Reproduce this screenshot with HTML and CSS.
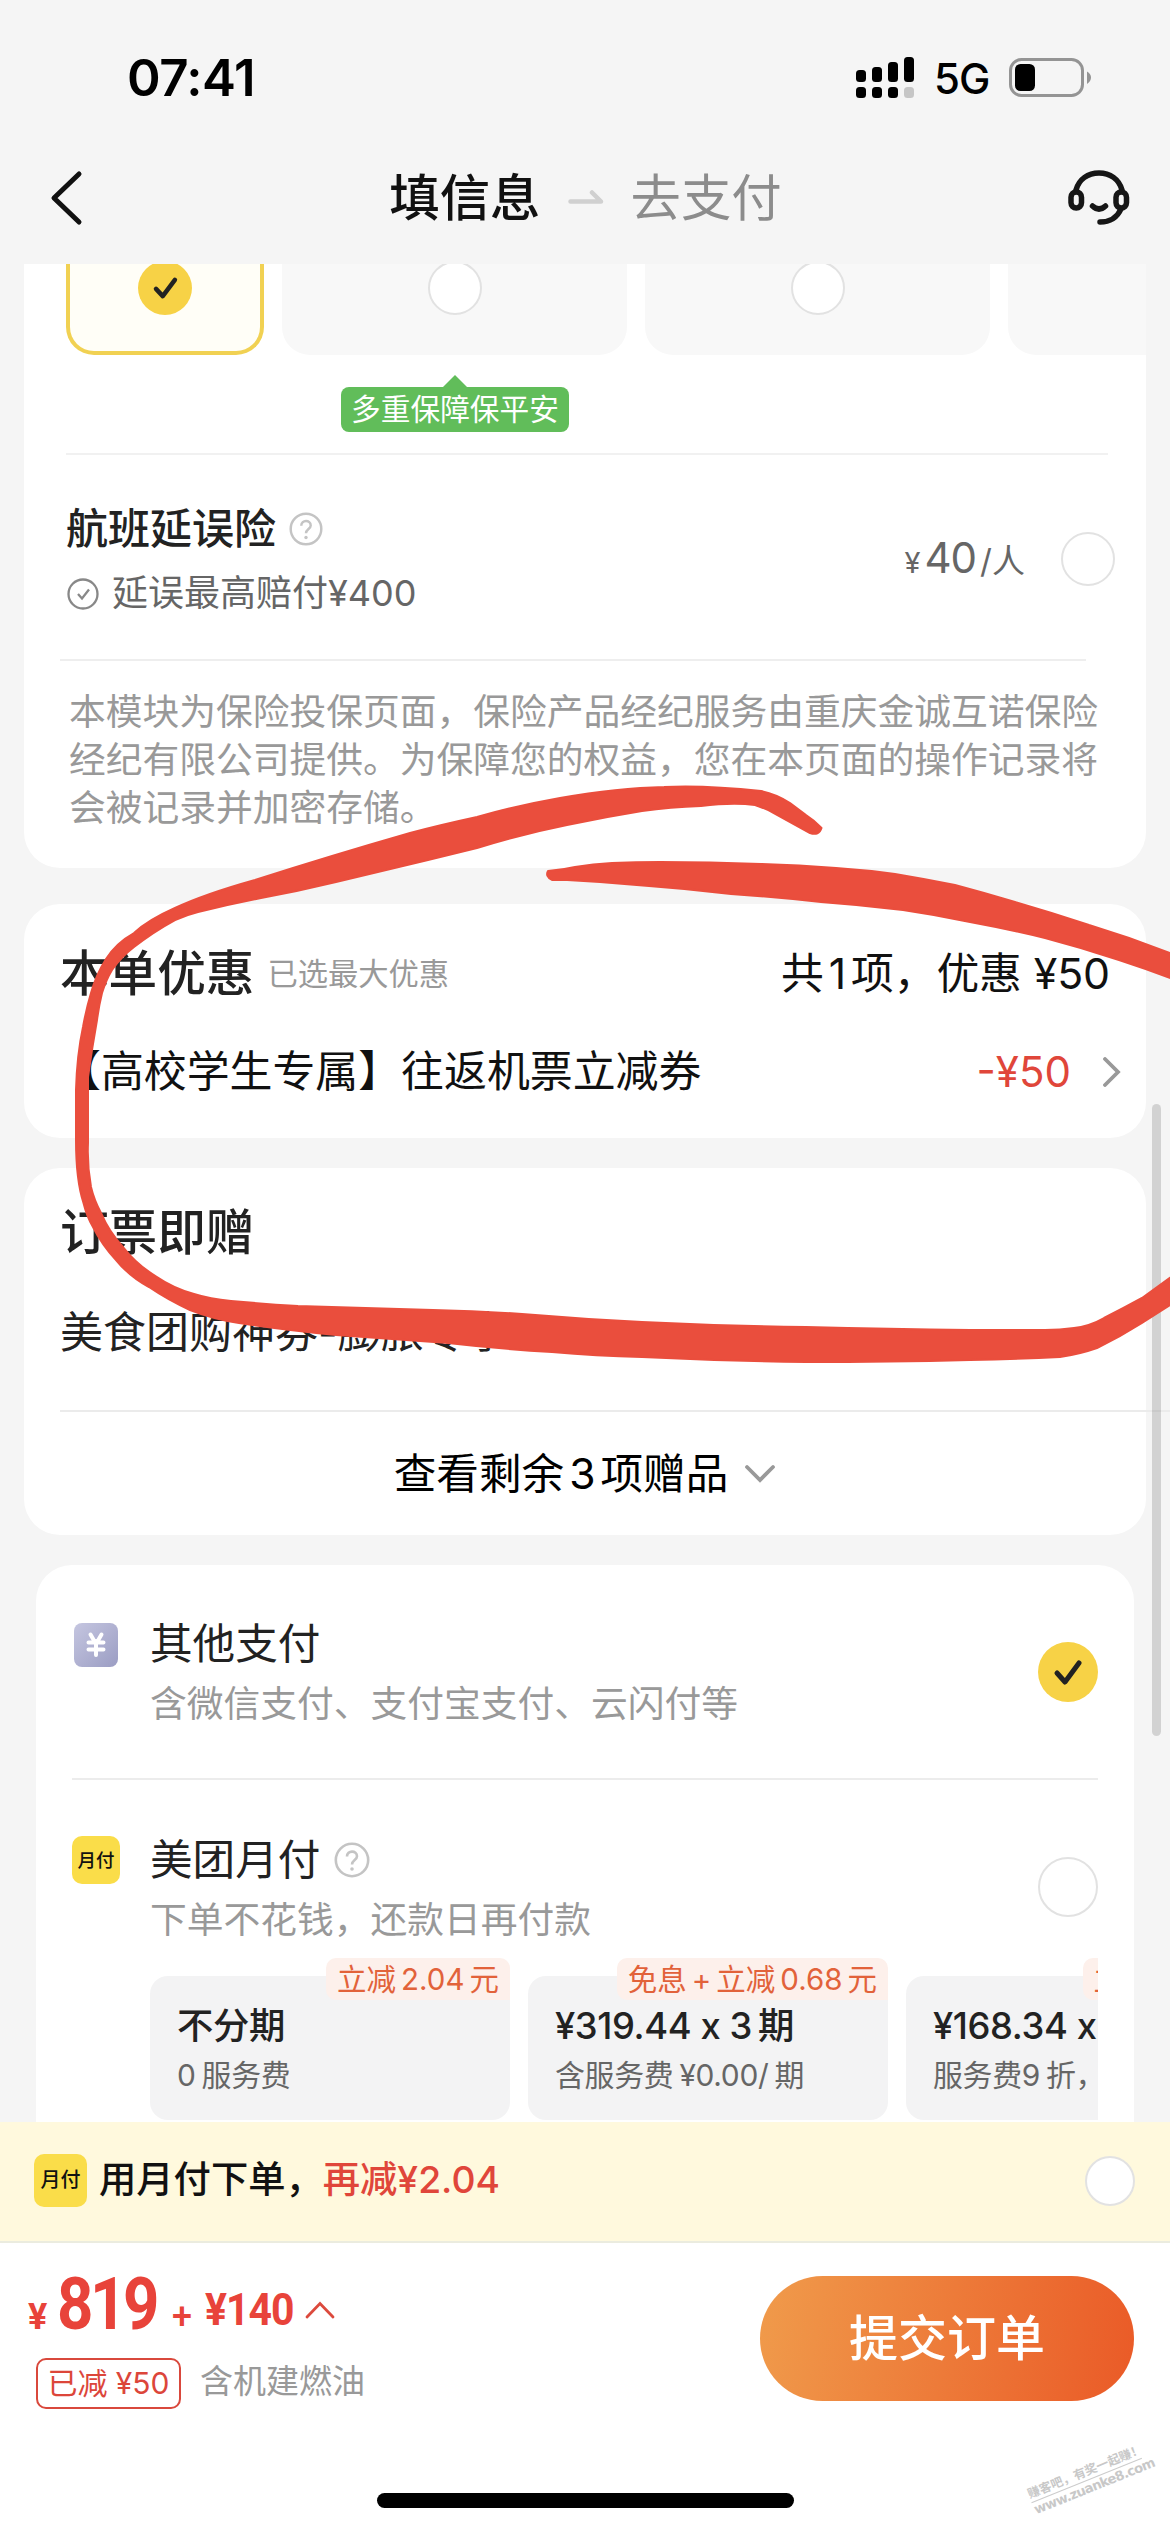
FILE: index.html
```html
<!DOCTYPE html>
<html lang="zh-CN">
<head>
<meta charset="utf-8">
<title>填信息</title>
<link rel="stylesheet" href="styles.css">
</head>
<body>
<div class="screen">
  <header class="status">
    <span class="time">07:41</span>
    <svg class="signal" width="58" height="42" viewBox="0 0 58 42">
      <rect x="0" y="13" width="10" height="12" rx="3.5"/><rect x="16" y="10" width="10" height="15" rx="3.5"/><rect x="32" y="5" width="10" height="20" rx="3.5"/><rect x="48" y="0" width="10" height="25" rx="3.5"/>
      <rect x="0" y="30" width="10" height="11" rx="3.5"/><rect x="16" y="30" width="10" height="11" rx="3.5"/><rect x="32" y="30" width="10" height="11" rx="3.5"/><rect x="48" y="30" width="10" height="11" rx="3.5" fill="#c6c6c6"/>
    </svg>
    <span class="net">5G</span>
    <svg class="battery" width="84" height="40" viewBox="0 0 84 40">
      <rect x="1.5" y="1.5" width="72" height="36" rx="11" fill="none" stroke="#949494" stroke-width="3"/>
      <rect x="6" y="6" width="20" height="27" rx="5.500"/><path d="M78 13.500Q82 16 82 19.500T78 26Z" fill="#949494"/>
    </svg>
  </header>
  <nav class="nav">
    <svg class="back" width="34" height="56" viewBox="0 0 34 56"><path d="M30 4L5 28L30 52" fill="none" stroke="#111" stroke-width="5" stroke-linecap="round" stroke-linejoin="round"/></svg>
    <div class="steps">
      <span class="step on">填信息</span>
      <svg width="36" height="16" viewBox="0 0 36 16"><path d="M2.500 11.500H33L24 2.500" fill="none" stroke="#d0d0d0" stroke-width="4.500" stroke-linecap="round" stroke-linejoin="round"/></svg>
      <span class="step">去支付</span>
    </div>
    <svg class="service" width="62" height="56" viewBox="0 0 62 56" fill="none" stroke="#161616" stroke-width="5.500" stroke-linecap="round">
      <path d="M8 20C11 9 20 3 31 3S51 9 54 20"/><rect x="3" y="22" width="10.500" height="16" rx="5.200"/><rect x="48" y="22" width="10.500" height="16" rx="5.200"/>
      <path d="M53 39C49 48 41 52 32 52M24.500 36Q31 42 37.500 36"/>
    </svg>
  </nav>

  <main class="content">
    <section class="card insure">
      <div class="options">
        <div class="option chosen"><span class="radio checked"><svg viewBox="0 0 60 60"><path d="M20 31L27.500 39L41 21"/></svg></span></div>
        <div class="option"><span class="radio"></span></div>
        <div class="option"><span class="radio"></span></div>
        <div class="option"></div>
      </div>
      <div class="tip">多重保障保平安</div>
      <div class="delay">
        <div class="delay-info">
          <div class="delay-title">航班延误险<svg class="help" viewBox="0 0 36 36"><circle cx="18" cy="18" r="16.200"/><path d="M13 14.500C13 8 23 8 23 14.200C23 18 18 18 18 22.500"/><circle class="dot" cx="18" cy="27" r="1.800"/></svg></div>
          <div class="delay-sub"><svg width="32" height="32" viewBox="0 0 32 32" fill="none" stroke="#888" stroke-width="2.300"><circle cx="16" cy="16" r="14.500"/><path d="M11 16L15 20.500L22 11.500"/></svg>延误最高赔付¥400</div>
        </div>
        <div class="delay-price"><small>¥</small>40<em>/人</em></div>
        <span class="radio"></span>
      </div>
      <p class="notice">本模块为保险投保页面，保险产品经纪服务由重庆金诚互诺保险经纪有限公司提供。为保障您的权益，您在本页面的操作记录将会被记录并加密存储。</p>
    </section>

    <section class="card discount">
      <div class="row head"><h2>本单优惠</h2><span class="hint">已选最大优惠</span><span class="sum">共<i>1</i>项，优惠 ¥50</span></div>
      <div class="row coupon"><span>【高校学生专属】往返机票立减券</span><span class="minus">-¥50</span><svg width="18" height="30" viewBox="0 0 18 30"><path d="M2 2L15 15L2 28" fill="none" stroke="#999" stroke-width="3.800" stroke-linecap="round"/></svg></div>
    </section>

    <section class="card gifts">
      <div class="row head"><h2>订票即赠</h2></div>
      <div class="row gift">美食团购神券-膨胀专享</div>
      <div class="more"><span>查看剩余<b>3</b>项赠品</span><svg width="32" height="20" viewBox="0 0 32 20"><path d="M3 3L16 16L29 3" fill="none" stroke="#999" stroke-width="3.800" stroke-linecap="round"/></svg></div>
    </section>

    <section class="card pay">
      <div class="method other">
        <svg class="logo coin" width="44" height="44" viewBox="0 0 44 44"><defs><linearGradient id="lav" x1="0" y1="0" x2="1" y2="1"><stop offset="0" stop-color="#c5c6e0"/><stop offset="1" stop-color="#9b9dc3"/></linearGradient></defs><rect width="44" height="44" rx="8" fill="url(#lav)"/><path d="M16.500 11.500L20 17.500M27.500 11.500L24 17.500M14.500 19.500H29.500M14.500 26.500H29.500M22 18V32" fill="none" stroke="#fff" stroke-width="4" stroke-linecap="round"/></svg>
        <div class="label"><div class="name">其他支付</div><div class="desc">含微信支付、支付宝支付、云闪付等</div></div>
        <span class="radio big checked"><svg viewBox="0 0 60 60"><path d="M19 31L27 40L41 21"/></svg></span>
      </div>
      <div class="method monthly">
        <span class="logo yf">月付</span>
        <div class="label"><div class="name">美团月付<svg class="help" viewBox="0 0 36 36"><circle cx="18" cy="18" r="16.200"/><path d="M13 14.500C13 8 23 8 23 14.200C23 18 18 18 18 22.500"/><circle class="dot" cx="18" cy="27" r="1.800"/></svg></div><div class="desc">下单不花钱，还款日再付款</div></div>
        <span class="radio big"></span>
      </div>
      <div class="plans">
        <div class="plan"><span class="tag">立减<i>2.04</i>元</span><b>不分期</b><span class="fee">0<i></i>服务费</span></div>
        <div class="plan"><span class="tag">免息<i>+</i>立减<i>0.68</i>元</span><b>¥319.44 x 3<i></i>期</b><span class="fee">含服务费<i></i>¥0.00/<i></i>期</span></div>
        <div class="plan"><span class="tag">立减<i>0.34</i>元</span><b>¥168.34 x 6期</b><span class="fee">服务费9<i></i>折，</span></div>
      </div>
    </section>
  </main>

  <div class="promo"><span class="yf">月付</span><span class="promo-text">用月付下单，<em>再减¥2.04</em></span><span class="radio small"></span></div>

  <footer class="bar">
    <div class="totals">
      <div class="price"><span class="yen">¥</span><span class="fare">819</span><span class="plus">+</span><span class="tax">¥140</span><svg width="30" height="18" viewBox="0 0 30 18"><path d="M2 16L15 2.500L28 16" fill="none" stroke="#dc4a3d" stroke-width="2.800" stroke-linecap="round"/></svg></div>
      <div class="extras"><span class="off">已减 ¥50</span><span class="fuel">含机建燃油</span></div>
    </div>
    <button class="submit">提交订单</button>
  </footer>
  <div class="home-area"><div class="home"></div></div>

  <div class="scroll"></div>
  <svg class="ink" width="1170" height="600" viewBox="0 780 1170 600">
    <path d="M821.500 828Q814 820 806 815L790 803Q776 794 761 791Q705 785 664 787Q618 788 560 798Q515 806 477 817Q440 825 410 833Q330 856 255 880Q205 894 175 908Q148 920 134 933Q116 943 106 959Q96 975 91 993Q86 1010 83 1027Q77 1055 76 1090V1140Q76 1180 83.500 1203Q87 1217 93 1227Q102 1245 116 1260Q130 1277 149 1287Q168 1300 190 1310Q213 1319 239 1323Q285 1330 336 1335Q390 1339 448 1343Q500 1349 552 1352Q596 1356 642 1357Q725 1361 806 1362Q890 1362 970 1360Q1020 1359 1060 1357Q1080 1354 1097 1348Q1120 1337 1142 1323L1175 1302V1274L1142 1298Q1122 1309 1104 1318Q1090 1326 1074 1328Q1060 1330 1045 1330H970Q890 1329 806 1327Q724 1326 642 1322Q582 1319 522 1314Q478 1311 433 1310Q365 1308 298 1306Q264 1304 231 1301Q210 1299 194 1294Q173 1288 157 1277Q137 1265 123 1247Q109 1232 101 1213Q94 1200 91 1187Q87 1165 88 1143V1077Q92 1048 97 1020Q99 1005 102 993Q106 980 112 970Q121 957 134 947Q153 932 175 920Q186 915 198 912Q230 904 261 898Q299 891 336 882Q382 871 428 860L477 848Q522 834 567 825Q605 817 642 811Q670 807 701 806Q733 802 755 805Q764 808 772 812Q790 822 810 833Q819 836 821.500 828Z"/>
    <path d="M548 871Q562 870 575 867Q593 864 612 863Q636 862 660 862Q710 862 761 864Q799 865 836 868Q866 870 895 874Q925 879 955 885Q985 893 1015 902Q1053 913 1089 925Q1132 938 1175 955V980Q1147 969 1119 960Q1083 948 1045 938Q1008 929 970 922Q937 915 903 910Q862 905 821 902Q776 897 731 894Q690 889 649 886Q608 882 567 880H552Q545 876 548 871Z"/>
  </svg>
  <div class="mark"><span>赚客吧，有奖一起赚！</span><span class="url">www.zuanke8.com</span></div>
</div>
</body>
</html>
```
FILE: styles.css
```css
* { box-sizing: border-box; }
body { margin: 0; }
i, em { font-style: normal; }
svg { display: block; flex: none; }
.screen {
  position: relative;
  width: 1170px;
  height: 2532px;
  overflow: hidden;
  display: flex;
  flex-direction: column;
  background: #f5f5f5;
  color: #222;
  font-family: Inter, "Noto Sans CJK SC", sans-serif;
  line-height: 1.2;
}

/* status bar and navigation */
.status { height: 132px; padding: 24px 77px 0 127px; display: flex; align-items: center; color: #000; }
.time { font-size: 51px; font-weight: 600; letter-spacing: -0.5px; margin-right: auto; }
.net { font-size: 42px; font-weight: 500; margin: 3px 0 0 20px; width: 75px; letter-spacing: -1px; }
.nav { height: 132px; padding: 0 40px 0 49px; display: flex; align-items: center; justify-content: space-between; }
.steps { display: flex; align-items: center; gap: 27px; font-size: 50.4px; line-height: 66px; padding-left: 20px; }
.step { color: #8c8c8c; }
.step.on { color: #111; font-weight: 500; }

.content { height: 1858px; display: flex; flex-direction: column; overflow: hidden; }
.card { flex: none; margin: 0 24px; background: #fff; border-radius: 36px; }
.card h2 { margin: 0; font-size: 48.6px; font-weight: 500; }
.row { display: flex; align-items: center; padding: 0 36px; }

.radio { display: block; flex: none; width: 54px; height: 54px; border: 2.5px solid #e2e2e2; border-radius: 50%; background: #fff; }
.radio.big { width: 60px; height: 60px; }
.radio.small { width: 50px; height: 50px; }
.radio.checked { border: 0; background: #f7d246; }
.radio path { fill: none; stroke: #222; stroke-width: 5; stroke-linecap: round; stroke-linejoin: round; }
.help { width: 36px; height: 36px; fill: none; stroke: #c4c4c4; stroke-width: 2.6; }
.help .dot { fill: #c4c4c4; stroke: none; }

/* insurance */
.insure { height: 604px; border-radius: 0 0 36px 36px; }
.options { height: 91px; padding-left: 42px; display: flex; gap: 18px; overflow: hidden; }
.option { flex: none; width: 345px; height: 91px; background: #f8f8f8; border-radius: 0 0 28px 28px; display: flex; justify-content: center; }
.option .radio { margin-top: -3px; }
.option.chosen { width: 198px; background: #fffef7; border: 4px solid #f1d152; border-top: 0; }
.tip { position: relative; width: 228px; height: 45px; margin: 32px 0 21px 317px; border-radius: 8px; background: #61bd5a; color: #fff; font-size: 29.7px; line-height: 45px; text-align: center; white-space: nowrap; }
.tip::before { content: ""; position: absolute; left: 102px; top: -12px; border: 12px solid transparent; border-top: 0; border-bottom-color: #61bd5a; }
.delay { height: 206px; margin: 0 38px 0 42px; padding-top: 42px; border-top: 2px solid #f1f1f1; display: flex; }
.delay-info { flex: 1; }
.delay-title { display: flex; align-items: center; height: 64px; font-size: 42px; font-weight: 500; }
.delay-title .help { width: 34px; height: 34px; margin-left: 13px; }
.delay-sub { display: flex; align-items: center; gap: 13px; height: 66px; padding-left: 1px; font-size: 36px; color: #666; }
.delay-price { display: flex; align-items: baseline; margin: 33px 36px 0 0; font-size: 42px; line-height: 56px; color: #666; letter-spacing: -1px; }
.delay-price small { font-size: 29px; margin-right: 5px; }
.delay-price em { font-size: 33px; letter-spacing: 0; margin-left: 4px; }
.delay > .radio { margin: 35px -7px 0 0; }
.notice { position: relative; margin: 0 0 0 36px; padding: 27px 0 0 9px; width: 1041px; border-top: 2px solid #eee; font-size: 36.75px; line-height: 48px; color: #999; border-image: linear-gradient(90deg, #eee 1025px, transparent 1025px) 1; }

/* discounts and gifts */
.discount { height: 234px; margin-top: 36px; padding-top: 36px; }
.head { height: 68px; }
.hint { font-size: 30.3px; color: #999; margin-left: 13px; margin-right: auto; }
.sum { font-size: 42.8px; color: #111; letter-spacing: -0.1px; }
.sum i { margin: 0 5px; }
.coupon { height: 128px; padding-left: 34px; padding-right: 25px; font-size: 42.9px; color: #111; white-space: nowrap; }
.minus { margin-left: auto; margin-right: 32px; font-size: 42px; color: #e0463a; }
.gifts { height: 367px; margin-top: 30px; padding-top: 31px; }
.gift { height: 132px; font-size: 43px; }
.more { height: 125px; margin: 11px -24px 0 36px; border-top: 2px solid #ebebeb; padding-right: 60px; display: flex; align-items: center; justify-content: center; gap: 16px; font-size: 42.6px; color: #000; }
.more b { font-weight: 400; margin: 0 5px; }

/* payment */
.pay { height: 560px; margin: 30px 36px 0; padding: 0 36px; border-radius: 36px 36px 0 0; }
.method { display: flex; height: 215px; }
.other { padding-top: 49px; border-bottom: 2px solid #ececec; }
.monthly { height: 178px; padding-top: 50px; }
.logo { flex: none; }
.coin { margin: 9px 32px 0 2px; }
.label { flex: 1; line-height: 60px; }
.name { display: flex; align-items: center; height: 60px; font-size: 42.6px; }
.name .help { margin-left: 14px; }
.desc { font-size: 36.75px; color: #999; }
.other .radio { margin-top: 28px; }
.monthly .radio { margin-top: 27px; }
.yf { width: 48px; height: 48px; border-radius: 10px; background: #fadd49; color: #111; font-size: 18.5px; font-weight: 500; line-height: 48px; text-align: center; }
.logo.yf { margin: 6px 30px 0 0; }
.plans { height: 167px; margin-left: 78px; display: flex; gap: 18px; overflow: hidden; }
.plan { position: relative; flex: none; width: 360px; height: 144px; margin-top: 18px; padding: 24px 0 0 27px; border-radius: 18px; background: #f3f3f4; white-space: nowrap; }
.plan b { display: block; font-size: 36.4px; font-weight: 500; line-height: 52px; letter-spacing: -0.4px; }
.plan .fee { display: block; font-size: 29.9px; line-height: 46px; color: #666; letter-spacing: -0.3px; }
.fee i, .plan b i { margin-left: 6px; }
.tag { position: absolute; right: 0; top: -18px; height: 42px; padding: 0 11px; border-radius: 10px 10px 0 10px; background: #fdf0eb; color: #e2623a; font-size: 29.5px; line-height: 42px; }
.tag i { margin: 0 5px; }

/* bottom bar */
.promo { flex: none; height: 121px; padding: 0 35px 2px 34px; border-bottom: 2px solid #ebecdf; background: #fff9dd; display: flex; align-items: center; font-size: 37.3px; font-weight: 500; color: #111; }
.promo .yf { width: 53px; height: 53px; line-height: 53px; font-size: 20px; margin-right: 12px; }
.promo em { color: #e0463a; }
.promo .radio { margin-left: auto; }
.bar { flex: none; height: 250px; padding: 33px 36px 0 28px; background: #fff; display: flex; justify-content: space-between; }
.price { display: flex; align-items: baseline; height: 66px; line-height: 56px; color: #e8433a; font-family: Roboto, Inter, sans-serif; font-weight: 700; }
.yen { font-size: 36px; width: 29px; }
.fare { font-size: 73px; letter-spacing: -4px; width: 115px; transform: scaleX(.87); transform-origin: 0 50%; }
.plus { font-size: 36px; font-weight: 500; width: 33px; }
.tax { font-size: 44px; line-height: 48px; letter-spacing: -1px; width: 100px; transform: translateY(-4px) scaleX(.93); transform-origin: 0 50%; }
.price svg { align-self: flex-start; margin-top: 25px; }
.extras { display: flex; align-items: center; margin: 16px 0 0 8px; }
.off { width: 145px; height: 51px; border: 2px solid #d9483c; border-radius: 10px; color: #dc463a; font-size: 30px; line-height: 47px; text-align: center; white-space: nowrap; }
.fuel { margin: -3px 0 0 19px; font-size: 33px; color: #999; }
.submit { width: 374px; height: 125px; padding: 0; border: 0; border-radius: 63px; background: linear-gradient(100deg, #f09b4b, #ea5a27); color: #fff; font: 500 49px/125px Inter, "Noto Sans CJK SC", sans-serif; }
.home-area { flex: 1; background: #fff; }
.home { width: 417px; height: 15px; margin: 0 auto; border-radius: 8px; background: #000; }

/* overlays */
.scroll { position: absolute; left: 1152px; top: 1104px; width: 9px; height: 632px; border-radius: 5px; background: rgba(0, 0, 0, .14); }
.ink { position: absolute; left: 0; top: 780px; fill: #ea4e3d; stroke: #ea4e3d; stroke-width: 2; stroke-linejoin: round; }
.mark { position: absolute; left: 1027px; top: 2463px; width: 119px; transform: rotate(-22deg); color: #c8c8c8; font-size: 12.3px; font-weight: 700; line-height: 17px; white-space: nowrap; }
.mark span { display: block; }
.mark .url { border-top: 1px solid #ccc; font: 700 13.3px/16px "DejaVu Sans", sans-serif; letter-spacing: -0.7px; }
```
